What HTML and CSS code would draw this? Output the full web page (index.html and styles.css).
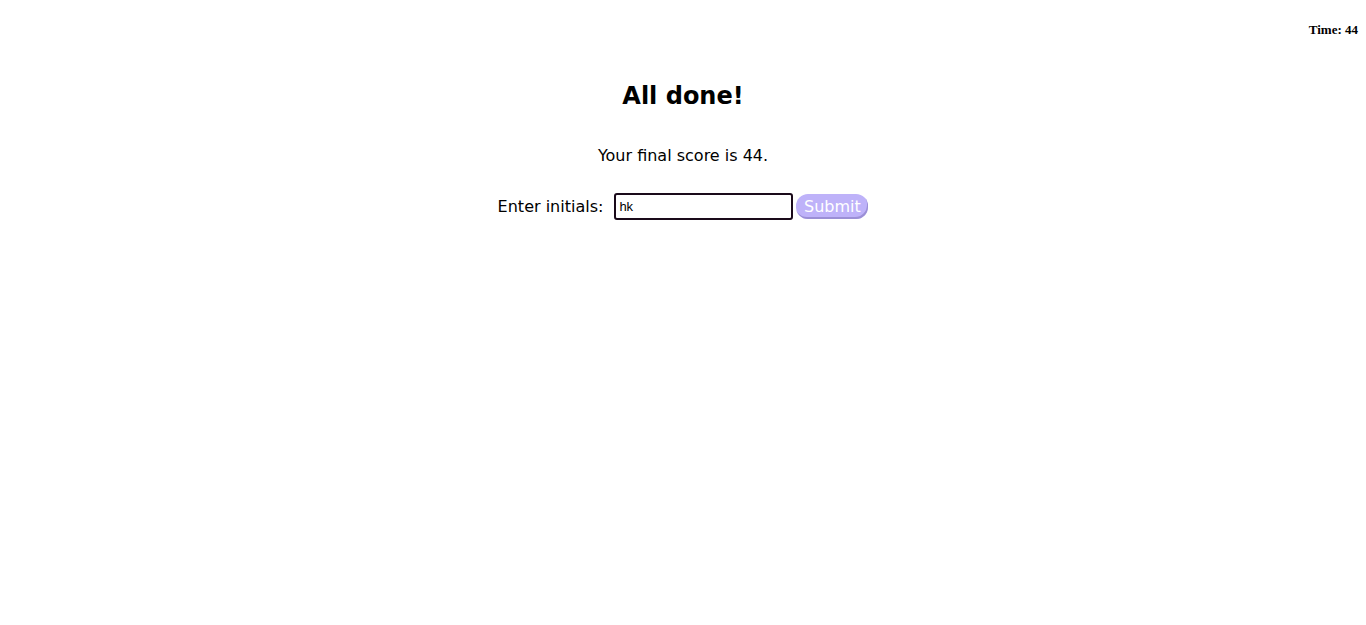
FILE: index.html
```html
<!DOCTYPE html>
<html>
<head>
<meta charset="utf-8">
<link rel="stylesheet" href="styles.css">
</head>
<body>
<header class="topbar">
  <div class="timer">Time: 44</div>
</header>
<main class="done">
  <h1 class="title">All done!</h1>
  <p class="score">Your final score is 44.</p>
  <form class="form">
    <label class="label" for="initials">Enter initials:</label>
    <input class="input" id="initials" type="text" value="hk" autofocus>
    <button class="submit" type="button">Submit</button>
  </form>
</main>
</body>
</html>
```
FILE: styles.css
```css
html, body {
  margin: 0;
  padding: 0;
  background: #ffffff;
}
body {
  font-family: "DejaVu Sans", Verdana, sans-serif;
  color: #000;
}
.topbar {
  display: flex;
  justify-content: flex-end;
  padding: 22px 8px 0 0;
  height: 20px;
}
.timer {
  font-family: "Liberation Serif", "Times New Roman", serif;
  font-weight: bold;
  font-size: 13px;
  line-height: 16px;
}
.done {
  display: flex;
  flex-direction: column;
  align-items: center;
  padding-top: 39px;
}
.title {
  margin: 0;
  font-size: 24px;
  line-height: 30px;
  font-weight: bold;
}
.score {
  margin: 35px 0 0 0;
  font-size: 16px;
  line-height: 20px;
}
.form {
  margin-top: 27px;
  display: flex;
  align-items: center;
}
.label {
  font-size: 16px;
  line-height: 20px;
  margin-right: 11px;
}
.input {
  box-sizing: border-box;
  width: 179px;
  height: 27px;
  border: 2px solid #1a0a1a;
  border-radius: 3px;
  padding: 0 3px;
  font-family: "Liberation Sans", Arial, sans-serif;
  font-size: 13px;
  outline: none;
  color: #000;
}
.submit {
  box-sizing: border-box;
  margin-left: 3px;
  width: 72px;
  height: 25px;
  border: none;
  border-radius: 12px;
  background: #beb2f9;
  box-shadow: inset -1px -2px 0 #9b8fd6;
  color: #ffffff;
  font-family: "DejaVu Sans", Verdana, sans-serif;
  font-size: 16px;
  padding: 0;
  line-height: 23px;
}
```
